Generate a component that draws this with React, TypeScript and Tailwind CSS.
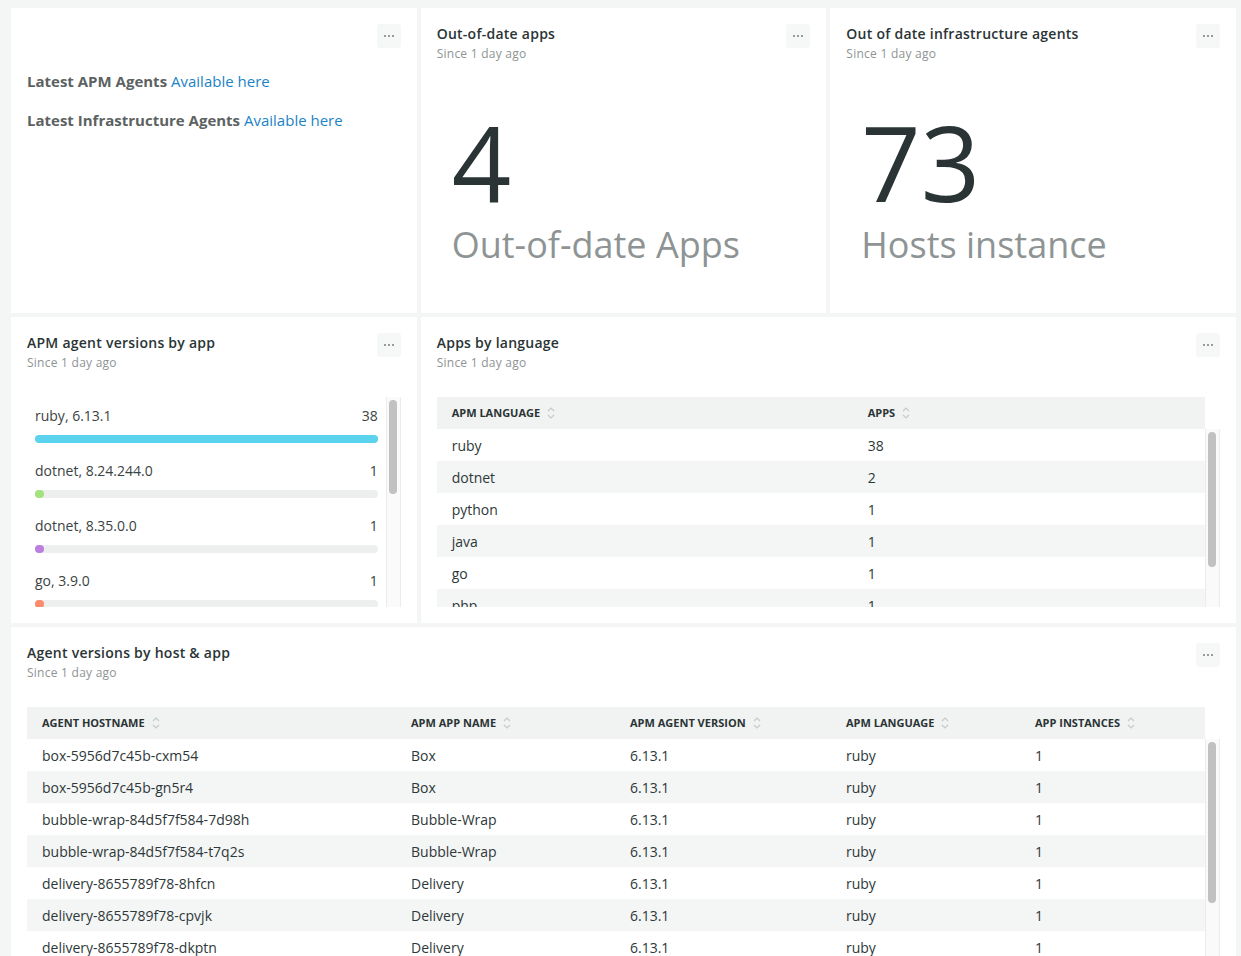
import React from 'react';

interface BarRow {
  label: string;
  value: number;
  color: string;
}

const barRows: BarRow[] = [
  { label: 'ruby, 6.13.1', value: 38, color: 'bg-[#5bd3ee]' },
  { label: 'dotnet, 8.24.244.0', value: 1, color: 'bg-[#a3e27c]' },
  { label: 'dotnet, 8.35.0.0', value: 1, color: 'bg-[#bb7fe0]' },
  { label: 'go, 3.9.0', value: 1, color: 'bg-[#fb8b6b]' },
  { label: 'java, 7.5.0', value: 1, color: 'bg-[#f7d35a]' },
  { label: 'python, 5.22.1.152', value: 1, color: 'bg-[#6c9ef0]' },
];

const languages = [
  ['ruby', '38'],
  ['dotnet', '2'],
  ['python', '1'],
  ['java', '1'],
  ['go', '1'],
  ['php', '1'],
];

const hosts = [
  ['box-5956d7c45b-cxm54', 'Box'],
  ['box-5956d7c45b-gn5r4', 'Box'],
  ['bubble-wrap-84d5f7f584-7d98h', 'Bubble-Wrap'],
  ['bubble-wrap-84d5f7f584-t7q2s', 'Bubble-Wrap'],
  ['delivery-8655789f78-8hfcn', 'Delivery'],
  ['delivery-8655789f78-cpvjk', 'Delivery'],
  ['delivery-8655789f78-dkptn', 'Delivery'],
  ['delivery-8655789f78-x2k9p', 'Delivery'],
];

const hostCols = ['w-[369px]', 'w-[219px]', 'w-[216px]', 'w-[189px]', 'flex-1'];

const MenuButton = () => (
  <button className="w-6 h-6 shrink-0 rounded-[3px] bg-[#f6f7f7] flex items-center justify-center gap-[2px]">
    <span className="w-[2px] h-[2px] bg-[#969c9c]" />
    <span className="w-[2px] h-[2px] bg-[#969c9c]" />
    <span className="w-[2px] h-[2px] bg-[#969c9c]" />
  </button>
);

const CardHeader = ({ title }: { title: string }) => (
  <div className="flex items-start justify-between shrink-0">
    <div>
      <h3 className="text-[14px] leading-5 font-semibold tracking-[0.25px] text-[#2a3434]">{title}</h3>
      <p className="text-[12px] leading-5 tracking-[0.25px] text-[#8e9494]">Since 1 day ago</p>
    </div>
    <MenuButton />
  </div>
);

const Scrollbar = ({ offset, size }: { offset: number; size: number }) => (
  <div className="w-[15px] shrink-0 border-x border-[#ebeded] bg-[#fafafa]">
    <div className="mx-auto w-2 rounded-full bg-[#c1c1c1]" style={{ marginTop: offset, height: size }} />
  </div>
);

const SortIcon = () => (
  <svg width="8" height="14" viewBox="0 0 8 14" fill="none" className="ml-[7px]">
    <path d="M1 5L4 2L7 5" stroke="#c6cbcb" strokeWidth="1.2" />
    <path d="M1 9L4 12L7 9" stroke="#c6cbcb" strokeWidth="1.2" />
  </svg>
);

const HeadCell = ({ label, className }: { label: string; className: string }) => (
  <div className={`${className} px-[15px] flex items-center text-[11px] font-bold uppercase text-[#2a3434]`}>
    {label}
    <SortIcon />
  </div>
);

const Billboard = ({ title, value, label }: { title: string; value: string; label: string }) => (
  <div className="bg-white p-4 flex flex-col overflow-hidden">
    <CardHeader title={title} />
    <div className="pl-[15px] mt-[43px]">
      <div className="text-[104px] leading-[110px] text-[#2a3434]">{value}</div>
      <div className="mt-[10px] text-[36px] leading-9 text-[#8e9494] whitespace-nowrap">{label}</div>
    </div>
  </div>
);

export default function App() {
  const max = Math.max(...barRows.map(r => r.value));

  return (
    <div className="h-[956px] overflow-hidden bg-[#f4f5f5] font-['Open_Sans',sans-serif] pt-2 pl-[11px] pr-[5px]">
      <div className="grid grid-cols-3 grid-rows-[305px_306px_400px] gap-[4px]">
        {/* Links */}
        <div className="bg-white p-4 flex flex-col">
          <div className="flex justify-end">
            <MenuButton />
          </div>
          <p className="mt-[21px] text-[15px] leading-6 font-bold text-[#5c6262]">
            Latest APM Agents <a className="font-normal text-[#1b83c6]">Available here</a>
          </p>
          <p className="mt-[15px] text-[15px] leading-6 font-bold text-[#5c6262]">
            Latest Infrastructure Agents <a className="font-normal text-[#1b83c6]">Available here</a>
          </p>
        </div>

        <Billboard title="Out-of-date apps" value="4" label="Out-of-date Apps" />
        <Billboard title="Out of date infrastructure agents" value="73" label="Hosts instance" />

        {/* Bars */}
        <div className="bg-white p-4 flex flex-col min-h-0 overflow-hidden">
          <CardHeader title="APM agent versions by app" />
          <div className="mt-6 flex flex-1 min-h-0">
            <div className="flex-1 overflow-hidden px-2">
              {barRows.map(row => (
                <div key={row.label} className="py-[9px]">
                  <div className="flex justify-between text-[14px] leading-5 text-[#3a4343]">
                    <span>{row.label}</span>
                    <span>{row.value}</span>
                  </div>
                  <div className="mt-[9px] h-2 rounded-full bg-[#edeeee]">
                    <div
                      className={`h-2 rounded-full ${row.color}`}
                      style={{ width: `${Math.max((row.value / max) * 100, 2.6)}%` }}
                    />
                  </div>
                </div>
              ))}
            </div>
            <Scrollbar offset={3} size={94} />
          </div>
        </div>

        {/* Languages table */}
        <div className="col-span-2 bg-white p-4 flex flex-col min-h-0 overflow-hidden">
          <CardHeader title="Apps by language" />
          <div className="mt-6 flex flex-col flex-1 min-h-0">
            <div className="flex h-8 shrink-0 bg-[#f1f2f2] mr-[15px]">
              <HeadCell label="APM Language" className="w-[416px]" />
              <HeadCell label="Apps" className="flex-1" />
            </div>
            <div className="flex flex-1 min-h-0">
              <div className="flex-1 overflow-hidden">
                {languages.map(([lang, apps], i) => (
                  <div
                    key={lang}
                    className={`flex h-8 items-center text-[14px] text-[#2e3838] ${i % 2 ? 'bg-[#f4f5f5]' : 'bg-white'}`}
                  >
                    <div className="w-[416px] px-[15px]">{lang}</div>
                    <div className="flex-1 px-[15px]">{apps}</div>
                  </div>
                ))}
              </div>
              <Scrollbar offset={3} size={135} />
            </div>
          </div>
        </div>

        {/* Hosts table */}
        <div className="col-span-3 bg-white p-4 flex flex-col min-h-0 overflow-hidden">
          <CardHeader title="Agent versions by host & app" />
          <div className="mt-6 flex flex-col flex-1 min-h-0">
            <div className="flex h-8 shrink-0 bg-[#f1f2f2] mr-[15px]">
              <HeadCell label="Agent Hostname" className={hostCols[0]} />
              <HeadCell label="APM App Name" className={hostCols[1]} />
              <HeadCell label="APM Agent Version" className={hostCols[2]} />
              <HeadCell label="APM Language" className={hostCols[3]} />
              <HeadCell label="App Instances" className={hostCols[4]} />
            </div>
            <div className="flex flex-1 min-h-0">
              <div className="flex-1 overflow-hidden">
                {hosts.map(([host, app], i) => (
                  <div
                    key={host}
                    className={`flex h-8 items-center text-[14px] text-[#2e3838] ${i % 2 ? 'bg-[#f4f5f5]' : 'bg-white'}`}
                  >
                    <div className={`${hostCols[0]} px-[15px]`}>{host}</div>
                    <div className={`${hostCols[1]} px-[15px]`}>{app}</div>
                    <div className={`${hostCols[2]} px-[15px]`}>6.13.1</div>
                    <div className={`${hostCols[3]} px-[15px]`}>ruby</div>
                    <div className={`${hostCols[4]} px-[15px]`}>1</div>
                  </div>
                ))}
              </div>
              <Scrollbar offset={3} size={161} />
            </div>
          </div>
        </div>
      </div>
    </div>
  );
}
